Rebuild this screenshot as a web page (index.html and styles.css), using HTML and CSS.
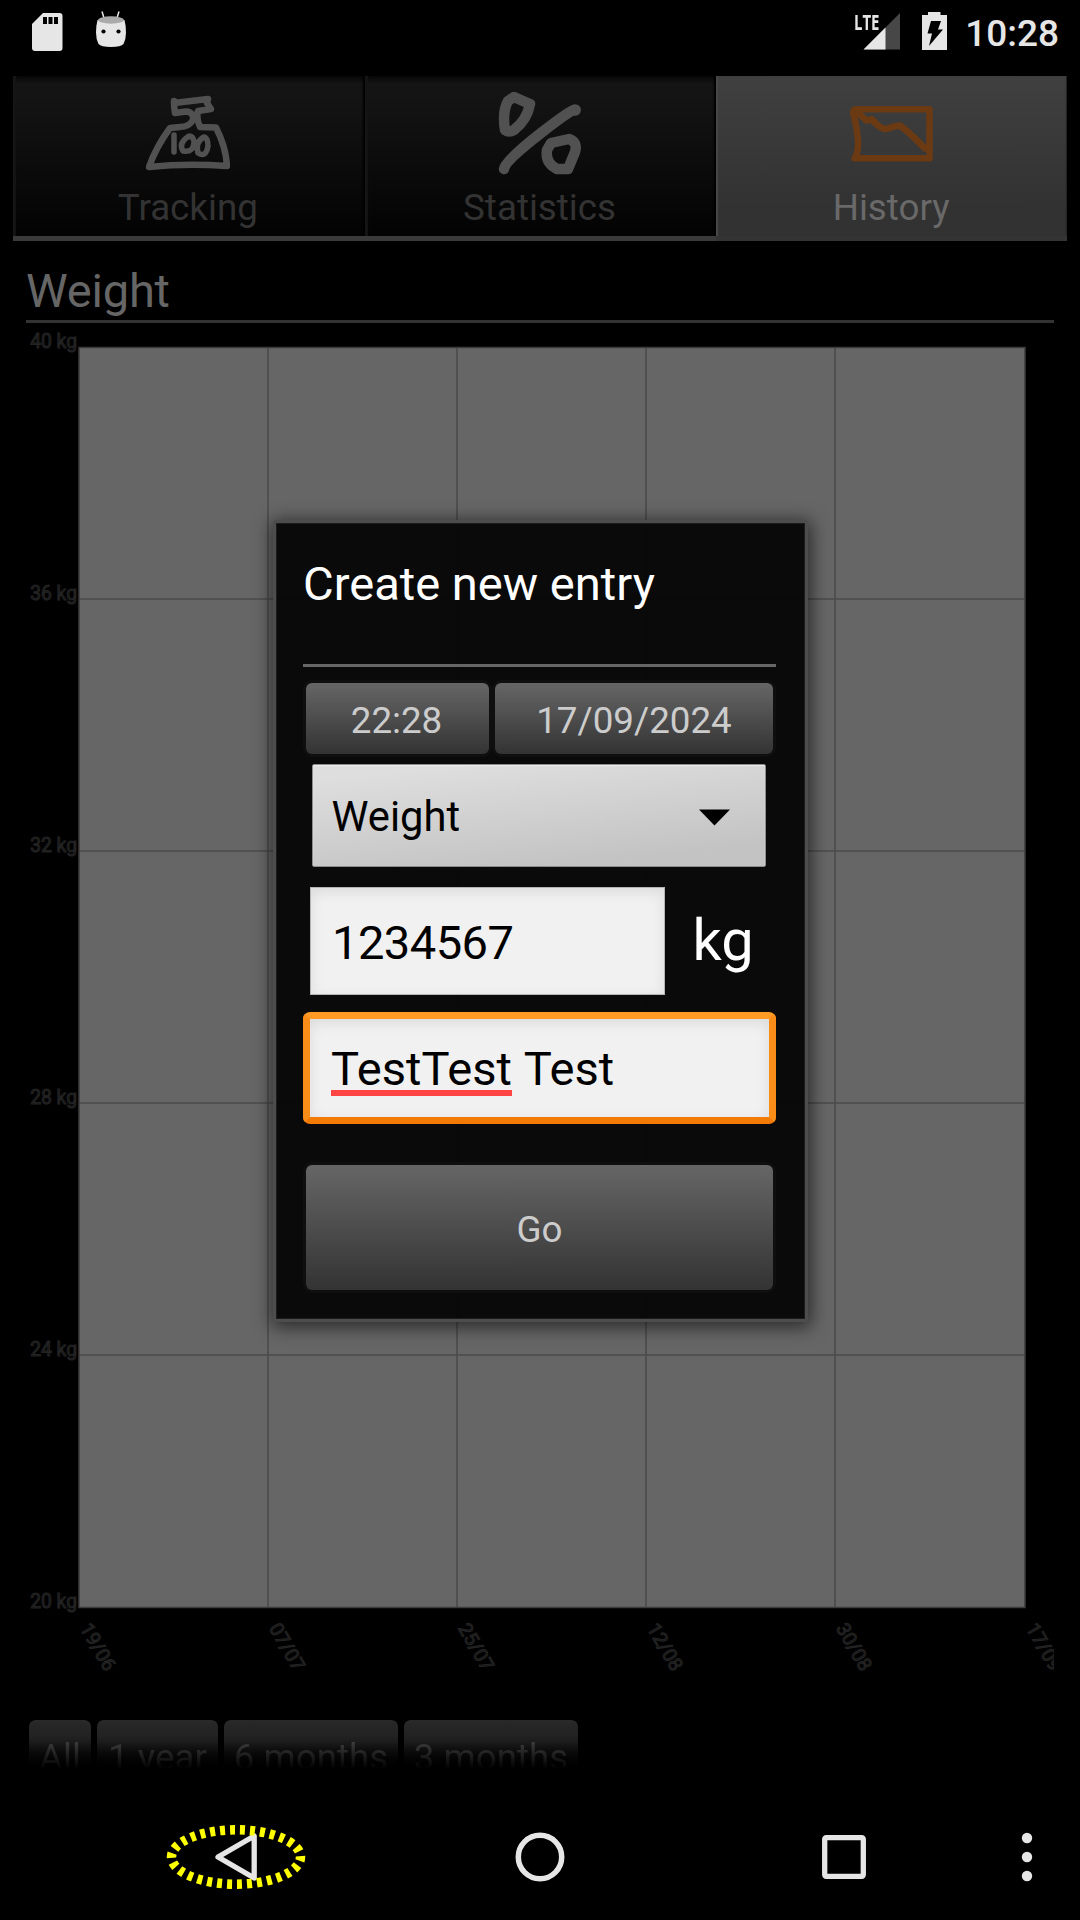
FILE: index.html
```html
<!DOCTYPE html>
<html lang="en">
<head>
<meta charset="utf-8">
<title>Create new entry</title>
<link rel="stylesheet" href="styles.css">
</head>
<body>
<div class="screen">
  <header class="status">
    <div class="status-left">
      <svg width="32" height="40" viewBox="0 0 32 40"><path d="M12 1H28.500a3 3 0 0 1 3 3V36a3 3 0 0 1-3 3H4a3 3 0 0 1-3-3V12Z" fill="#e6e6e6"/><path d="M12 5h4v7h-4zM17.500 5h4v7h-4zM23 5h4v7h-4z" fill="#000"/></svg>
      <svg width="32" height="38" viewBox="0 0 32 38"><path d="M7 1.500 9.300 9M24 1.500 21.700 9" stroke="#e6e6e6" stroke-width="1.500"/><path d="M2.500 10Q1 16 1 22.500T3.500 34Q6 37 16 37T28.500 34Q31 29 31 22.500T29.500 10Z" fill="#e6e6e6"/><ellipse cx="16" cy="10" rx="13" ry="3.700" fill="#aaa"/><circle cx="8.500" cy="21.500" r="2.100"/><circle cx="23.500" cy="21.500" r="2.100"/></svg>
    </div>
    <div class="status-right">
      <div class="signal"><span class="lte">LTE</span><svg width="37" height="37" viewBox="0 0 37 37"><path d="M37 0V36.500H.500Z" fill="#474747"/><path d="M22.500 14.500V36.500H.500Z" fill="#e6e6e6"/></svg></div>
      <svg width="25" height="38" viewBox="0 0 25 38"><path d="M6 0H18.500V3H25V38H0V3H6Z" fill="#e6e6e6"/><path d="M9 9H19L16 17.500H21L7 34 10 21.500H5.500Z" fill="#000"/></svg>
      <span class="clock">10:28</span>
    </div>
  </header>

  <nav class="tabs">
    <div class="tab">
      <svg class="tab-icon" viewBox="0 0 84 84"><g fill="none" stroke="#515151" stroke-width="6.500" stroke-linecap="round" stroke-linejoin="round"><path d="M28 9 Q28 16 29 21L40 19.500Q48 20 47 28 43 35 34 35L24 36 Q10 55 3 75 Q40 71 81 74 Q80 55 70 35.500L54 35Q50 27 52 19L65 17 61 11 62 7 28 11"/><path d="M28 43V60M43 44Q32 51 37 59 48 61 48 49 47 44 43 44ZM58 45Q49 50 52 61 60 66 62 54 62 46 58 45Z" stroke-width="5.500"/></g></svg>
      <span class="tab-label">Tracking</span>
    </div>
    <div class="tab">
      <svg class="tab-icon" viewBox="0 0 84 84"><g fill="none" stroke="#515151" stroke-width="10.500" stroke-linecap="round" stroke-linejoin="round"><path d="M16 5 L25 9 32 12Q29 28 16 38 11 41 7 38 4 20 10 9Z"/><path d="M6 77Q7 69 43 41T77.500 18.500"/><path d="M53 51L62 49 71 47Q80 50 77 60L70 77H59Q47 71 49 58Z"/></g></svg>
      <span class="tab-label">Statistics</span>
    </div>
    <div class="tab tab-active">
      <svg class="tab-icon" viewBox="0 0 84 84"><g fill="none" stroke="#6b3a12" stroke-width="6.500" stroke-linecap="round" stroke-linejoin="round"><path d="M6 17.300H80.500V66.300H5.500Q10 60 9 48T4 20Z"/><path d="M6 18 17.700 28.700 22.500 27Q33 39 39 36.500T51 33.500Q60 40 76 56.500L79 56"/></g></svg>
      <span class="tab-label">History</span>
    </div>
  </nav>

  <main class="history">
    <h1 class="heading">Weight</h1>
    <svg class="chart" width="1028" height="1370" viewBox="26 323 1028 1370">
      <rect x="79" y="347" width="946" height="1261" fill="#666"/>
      <path class="grid" d="M268 347V1607M457 347V1607M646 347V1607M835 347V1607M79 599H1025M79 851H1025M79 1103H1025M79 1355H1025"/>
      <path class="frame" d="M79 347.500H1025V1607.500H79Z"/>
      <g class="axis y-axis">
        <text x="77" y="348">40 kg</text><text x="77" y="599.500">36 kg</text><text x="77" y="851.500">32 kg</text><text x="77" y="1103.500">28 kg</text><text x="77" y="1355.500">24 kg</text><text x="77" y="1607.500">20 kg</text>
      </g>
      <g class="axis">
        <text transform="translate(79.500 1628) rotate(60)">19/06</text>
        <text transform="translate(268.500 1628) rotate(60)">07/07</text>
        <text transform="translate(457.500 1628) rotate(60)">25/07</text>
        <text transform="translate(646.500 1628) rotate(60)">12/08</text>
        <text transform="translate(835.500 1628) rotate(60)">30/08</text>
        <text transform="translate(1025.500 1628) rotate(60)">17/09</text>
      </g>
    </svg>
    <div class="ranges">
      <button class="range">All</button><button class="range range-year">1 year</button><button class="range range-months">6 months</button><button class="range range-months">3 months</button>
    </div>
  </main>

  <footer class="navbar">
    <svg width="140" height="66" viewBox="165.500 1824 140 66"><path d="M217.500 1857 253.700 1836V1878Z" fill="none" stroke="#e6e6e6" stroke-width="5.300" stroke-linejoin="round"/><ellipse cx="235.500" cy="1857" rx="64.500" ry="27.200" fill="none" stroke="#ff0" stroke-width="9.500" pathLength="300" stroke-dasharray="5 5" stroke-dashoffset="1"/></svg>
    <svg width="50" height="50" viewBox="0 0 50 50"><circle cx="25" cy="25" r="21.700" fill="none" stroke="#e6e6e6" stroke-width="5.500"/></svg>
    <svg width="44" height="44" viewBox="0 0 44 44"><rect x="2.700" y="2.700" width="38.600" height="38.600" rx="1.500" fill="none" stroke="#e6e6e6" stroke-width="5.300"/></svg>
    <svg width="12" height="50" viewBox="0 0 12 50"><g fill="#e6e6e6"><circle cx="6" cy="6" r="5.200"/><circle cx="6" cy="25" r="5.200"/><circle cx="6" cy="44" r="5.200"/></g></svg>
  </footer>

  <section class="dialog">
    <h2 class="dialog-title">Create new entry</h2>
    <div class="when"><button class="btn">22:28</button><button class="btn">17/09/2024</button></div>
    <div class="spinner"><span>Weight</span><svg width="31" height="17" viewBox="0 0 31 17"><path d="M0 .500H31L15.500 16.500Z"/></svg></div>
    <div class="amount"><div class="field field-number">1234567</div><span class="unit">kg</span></div>
    <div class="field field-focus"><span class="typo">TestTest</span>&nbsp;Test</div>
    <button class="btn btn-go">Go</button>
  </section>
</div>
</body>
</html>
```
FILE: styles.css
```css
* { box-sizing: border-box; }
body { margin: 0; background: #000; font-family: Roboto, sans-serif; }
h1, h2 { margin: 0; font-weight: 400; }
svg { display: block; flex: none; }
button { font: inherit; border: 0; padding: 0; }

.screen {
  position: relative;
  display: flex;
  flex-direction: column;
  width: 1080px;
  height: 1920px;
  overflow: hidden;
  background: #000;
}

/* status bar */
.status { display: flex; justify-content: space-between; height: 76px; padding: 0 21px 0 31px; }
.status-left { display: flex; gap: 32px; padding-top: 12px; }
.status-left svg + svg { margin-top: -2px; }
.status-right { display: flex; padding-top: 12px; }
.signal { position: relative; width: 45px; margin-right: 22px; padding: 1px 0 0 8px; }
.lte {
  position: absolute;
  left: -1px;
  top: -2px;
  font: 700 22px/22px "Open Sans", sans-serif;
  color: #e6e6e6;
  transform: scaleX(.68);
  transform-origin: 0 0;
}
.clock { margin-left: 18px; font-size: 37px; font-weight: 500; line-height: 43px; color: #e6e6e6; }

/* tabs */
.tabs { display: flex; height: 165px; margin: 0 13px; }
.tab {
  flex: 1;
  display: flex;
  flex-direction: column;
  align-items: center;
  padding: 16px 2px 0 0;
  border-bottom: 5px solid #3a3a3a;
  background: linear-gradient(#070707, #141414 8px, #141414 20px, #030303 156px);
  box-shadow: inset 3px 0 1px #151515, inset -2px 0 2px #000;
  color: #333;
}
.tab-active {
  padding-right: 1px;
  background: linear-gradient(#404040, #323232 130px);
  border-color: #343434;
  box-shadow: inset 2px 0 1px #484848, inset -1px 0 1px #222;
  color: #696969;
}
.tab-icon { width: 84px; height: 84px; }
.tab-label { margin-top: 10px; font-size: 36.75px; line-height: 43px; }

/* history page */
.history { height: 1527px; padding: 0 26px; overflow: hidden; }
.heading {
  height: 82px;
  padding-top: 22px;
  border-bottom: 3px solid #333;
  font-size: 47px;
  line-height: 56px;
  letter-spacing: -.2px;
  color: #666;
}
.grid { fill: none; stroke: #4b4b4b; stroke-width: 1.6; }
.frame { fill: none; stroke: #3c3c3c; stroke-width: 1.5; }
.axis { font-size: 19.3px; fill: #161616; stroke: #232323; stroke-width: 1; }
.y-axis { text-anchor: end; }
.ranges {
  display: flex;
  gap: 6px;
  height: 75px;
  margin-top: 24px;
  padding: 3px;
}
.range {
  flex: none;
  width: 62px;
  height: 72px;
  border-radius: 6px;
  background: linear-gradient(#292929, #222 16px, #000 49px);
  box-shadow: 0 0 0 3px #050505;
  font-size: 36.75px;
  line-height: 76px;
  color: #3c3c3c;
  -webkit-mask-image: linear-gradient(#000 22px, transparent 49px);
  mask-image: linear-gradient(#000 22px, transparent 49px);
}
.range-year { width: 121px; }
.range-months { width: 174px; }

/* system navigation */
.navbar {
  display: flex;
  align-items: center;
  height: 126px;
  margin-top: 26px;
  padding-left: 165.5px;
}
.navbar svg:nth-child(2) { margin-left: 209.5px; }
.navbar svg:nth-child(3) { margin-left: 257px; }
.navbar svg:nth-child(4) { margin-left: 155px; }

/* dialog */
.dialog {
  position: absolute;
  left: 276px;
  top: 523px;
  width: 529px;
  height: 796px;
  padding: 31px 29px 0 27px;
  border-radius: 1px;
  background: rgba(6, 6, 6, .96);
  box-shadow: inset 0 0 0 1px #1c1c1c, 0 0 0 3px #4d4d4d, 1px 3px 18px 5px rgba(0, 0, 0, .6);
}
.dialog-title {
  height: 113px;
  margin-bottom: 16px;
  border-bottom: 3px solid #666;
  font-size: 47.1px;
  line-height: 59px;
  color: #fff;
}
.btn {
  border-radius: 6px;
  background: linear-gradient(#666, #333);
  box-shadow: 0 0 0 3px #0f0f0f;
  font-size: 36.75px;
  line-height: 43px;
  color: #ccc;
}
.when {
  display: grid;
  grid-template: 71px / 183px 278px;
  gap: 6px;
  margin: 0 3px;
}
.when .btn { padding-top: 3px; }
.when .btn:first-child { padding-right: 2px; }
.spinner {
  display: flex;
  align-items: center;
  justify-content: space-between;
  width: 454px;
  height: 103px;
  margin: 9.5px 0 0 9px;
  padding: 2px 35.5px 0 18.5px;
  border: 1px solid #8c8c8c;
  border-radius: 2px;
  background: linear-gradient(174deg, #dedede 10%, #c3c3c3 85%);
  box-shadow: inset 0 1px 1px #eee;
  font-size: 41.7px;
  color: #000;
}
.spinner svg { margin-top: 2px; }
.amount { display: flex; align-items: center; margin: 20.5px 0 0 7px; }
.field {
  display: flex;
  align-items: center;
  width: 355px;
  height: 108px;
  padding: 2px 0 0 21px;
  border: 1px solid #b5b5b5;
  background: #f1f1f1;
  box-shadow: inset 0 4px 14px rgba(0, 0, 0, .09);
  font-size: 47.1px;
  line-height: 56px;
  color: #000;
}
.field-number { padding-top: 4px; letter-spacing: -.55px; }
.unit { margin: -3px 0 0 27.5px; font-size: 57.75px; line-height: 68px; color: #fff; }
.field-focus {
  width: 473px;
  height: 112px;
  margin-top: 17px;
  border: 7px solid;
  border-color: #ff9a24 #fa8d18 #f47a06 #fa8d18;
  border-radius: 7px;
}
.typo { position: relative; }
.typo::after {
  content: "";
  position: absolute;
  left: 0;
  right: 0;
  bottom: 1px;
  height: 6px;
  background: #ff4444;
}
.btn-go { display: block; width: 467px; height: 125px; margin: 41px 3px 0; padding-top: 3px; }
```
